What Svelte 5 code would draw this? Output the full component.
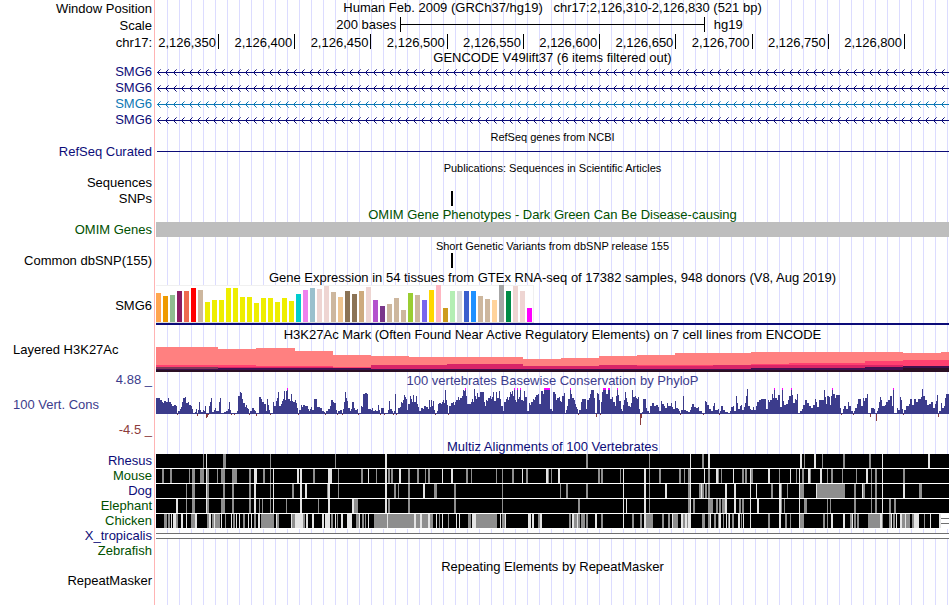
<script lang="ts">
    // drawings use three units for each pixel at the default width
    const UNITS = 2379;

    const positions = [
        "2,126,350", "2,126,400", "2,126,450", "2,126,500", "2,126,550",
        "2,126,600", "2,126,650", "2,126,700", "2,126,750", "2,126,800",
    ];

    const genes = [
        { name: "SMG6", tone: "navy" },
        { name: "SMG6", tone: "navy" },
        { name: "SMG6", tone: "blue" },
        { name: "SMG6", tone: "navy" },
    ];

    // colour:height of each tissue
    const tissues = (
        "ffa54f:29 ee9a00:26 8fbc8f:27 8b1c62:31 ee6a50:31 ff0000:34 cdb79e:32 " +
        "eeee00:20 eeee00:22 eeee00:22 eeee00:34 eeee00:34 eeee00:25 eeee00:25 " +
        "eeee00:19 eeee00:24 eeee00:24 eeee00:20 eeee00:24 eeee00:21 00cdcd:28 " +
        "ee82ee:32 9ac0cd:34 eed5d2:33 eed5d2:36 cdb79e:30 eec591:25 8b7355:31 " +
        "8b7355:28 cdaa7d:31 eed5d2:35 b452cd:22 7a378b:16 cdb79e:18 cdb79e:24 " +
        "cdb79e:12 9acd32:29 cdb79e:27 7a67ee:22 ffd700:32 ffb6c1:37 cd9b1d:14 " +
        "b4eeb4:31 d9d9d9:31 3a5fcd:31 1e90ff:31 cdb79e:26 cdb79e:23 ffd39b:22 " +
        "a6a6a6:37 008b45:31 eed5d2:36 eed5d2:31 ff00ff:14"
    ).split(" ").map((t) => {
        const [color, height] = t.split(":");
        return { color: "#" + color, height: +height };
    });

    // x:top steps, each layer filled down to the floor
    const FLOOR = 29;
    const layers = [
        { color: "#ff8080", steps: "0:4 62:6 100:5 139:8 177:12 215:13 253:14 367:16 405:15 443:13 481:12 519:10 595:9 747:10 785:9" },
        { color: "#ff4070", steps: "0:22 100:23 177:24 215:23 291:22 367:23 443:22 595:21 633:20 709:18 747:17" },
        { color: "#d82468", steps: "0:24 177:25 215:22 291:21 367:23 443:22 481:23 557:22 709:22 747:23" },
        { color: "#803858", steps: "0:24 62:26" },
        { color: "#401050", steps: "0:26 62:25 177:25 215:26 253:26 595:25 709:24 747:23" },
        { color: "#2c1024", steps: "0:27 595:27 747:25" },
    ].map(({ color, steps }) => ({
        color,
        path:
            steps
                .split(" ")
                .map((s, i) => {
                    const [x, y] = s.split(":");
                    return (i ? "H" : "M") + x + (i ? "V" : " ") + y;
                })
                .join("") + `H793V${FLOOR}H0Z`,
    }));

    // x:score, x counted from the start of the chunk
    const scores = readScores([
        [-168, "168:16 180:14 186:12 189:11 192:13 198:12 204:16 207:12 213:10 216:8 222:9 228:8 231:-1 234:3 240:5 243:7 246:12 249:16 252:16 255:17 258:11 264:12 267:9 273:8 276:5 279:1 285:2 288:5 291:-2 294:4 297:12 300:4 303:2 309:4 312:3 315:8 318:-4 321:-3 324:-1 327:8 330:12 333:16 336:2 342:4 345:6 348:3 354:3 357:12 360:16 363:1 372:2 378:3 384:5 387:12 390:4 393:-1 399:1 402:-1 408:1 411:3 414:18 420:22 423:21 426:15 429:11 435:7 438:9 441:6 444:5 447:-1 450:3 456:6 462:4 465:3 468:-2 474:1 477:17 483:15 486:12 492:10 498:3 501:15 504:9 507:4 510:-1 519:12 522:8 528:13 531:16 534:22 537:8 543:10 546:13 549:15 552:23 555:14 558:23 561:26 564:15 570:13 573:20 576:13 579:12 585:14 588:11 591:6 594:-1 597:4 603:9 606:7 609:9 615:8 621:8 624:5 627:3 630:5 633:7 636:4 642:15 651:7 660:6 666:3 672:2 675:-1 678:3 684:5 690:8 693:14 699:12 702:11 708:4 711:-1 714:3 720:4 726:-1 729:5 732:12 735:22 738:16 741:13 744:6 750:3 753:5 756:12 762:6 765:4 771:5 774:-1 783:8 786:7 789:20 795:21 801:20 804:5 810:5 813:3 819:8 825:4 828:7 834:5"],
        [642, "0:5 3:4 6:6 9:3 15:4 18:3 24:9 27:4 30:-1 33:6 42:-1 54:4 57:13 60:5 66:3 69:-1 72:3 75:20 78:-1 84:6 90:7 93:12 96:11 99:14 102:19 105:17 108:15 111:4 114:10 120:18 123:15 126:12 129:19 132:12 138:18 141:10 144:7 147:3 153:6 159:5 162:8 168:7 174:5 177:14 180:7 183:14 186:8 189:13 192:4 195:-1 201:3 204:10 207:11 213:10 216:12 219:14 222:11 225:24 228:14 231:9 234:-1 237:8 243:11 249:12 252:9 255:12 258:14 264:17 267:14 270:16 276:18 279:24 282:23 285:26 288:18 291:10 300:10 303:12 306:15 309:12 312:25 315:18 318:15 321:21 324:17 330:22 342:12 345:8 348:14 351:13 354:16 360:18 363:15 366:17 369:22 372:13 378:22 381:16 387:23 390:15 393:8 399:3 402:12 408:15 411:17 414:14 417:17 420:22 423:20 426:23 429:18 432:26 435:14 438:12 441:26 444:15 447:17 450:26 453:14 459:13 462:23 465:17 468:17 471:3 477:11 480:9 483:12 489:15 492:14 495:17 498:19 504:20 507:10 513:23 519:20 522:26 540:5 546:3 549:22 555:20 558:14 561:16 567:17 570:13 573:12 576:18 582:21 585:1 588:4 591:8 594:15 600:26 603:20 606:16 612:14 615:10 618:7 621:5 624:-1 627:4 633:12 636:15 642:15 648:5 651:14 657:16 660:20 663:24 672:16 675:1 678:-3 681:21 684:20 687:14 690:-1 693:12 696:22 699:26 708:20 714:26 720:15 726:17 729:12 735:8 738:18 741:26 744:19 747:13 753:5 756:3 759:9 762:14 765:22 768:16 771:12 774:8 780:7 783:11 786:24 789:17 795:18 798:16 801:15 804:17 807:5 810:-11"],
        [1452, "0:-11 3:-4 6:2 9:15 15:15 18:6 21:3 27:1 30:8 36:11 42:8 48:9 54:7 57:3 63:13 66:10 72:8 75:6 81:11 84:8 93:11 96:7 99:5 105:13 108:6 114:5 117:3 120:-1 123:4 129:18 132:4 138:3 144:2 150:4 153:7 156:10 162:7 168:6 174:7 177:3 186:1 189:-1 195:13 198:12 201:9 207:5 213:3 219:8 222:11 225:4 234:5 237:-1 240:3 243:8 249:4 255:2 264:1 270:3 273:7 279:8 282:3 288:18 291:11 294:5 300:8 303:9 306:4 312:7 315:11 318:18 321:25 324:8 330:5 333:4 339:7 342:4 348:8 351:12 357:14 363:15 378:5 384:14 387:12 390:14 396:20 399:16 402:26 405:16 411:14 414:19 420:7 426:26 429:13 432:9 438:10 444:14 447:18 453:26 456:19 459:11 465:15 468:14 471:20 474:1 480:3 486:5 489:9 495:14 501:11 507:8 513:6 519:9 525:15 528:12 531:7 537:14 546:14 552:24 555:17 558:10 561:18 567:17 570:9 573:18 576:26 579:20 585:16 588:19 600:6 603:-1 609:5 612:8 618:5 624:12 627:8 633:3 639:-1 642:3 645:6 651:10 654:15 663:8 669:16 672:13 675:16 681:20 684:1 690:-3 693:6 702:5 705:1 708:-7 711:3 714:6 717:12 720:17 723:14 726:8 735:9 738:12 744:14 750:18 756:8 759:26 762:1 771:6 774:4 780:17 783:14 786:5 789:-1 792:4 798:8 807:10 810:15 816:9 822:15 828:12 834:15 843:17 846:25 849:18 855:14 861:9 867:10 873:12 879:6 885:10 888:13 891:19 894:-3 897:3 903:11 906:6 912:8 915:16 918:20 927:0"],
    ]);

    function readScores(chunks: [number, string][]) {
        const points = chunks.flatMap(([start, text]) =>
            text.split(" ").map((p) => {
                const [x, score] = p.split(":").map(Number);
                return { x: x + start, score };
            }),
        );
        points.sort((a, b) => a.x - b.x);
        return points.slice(0, -1).map((p, i) => ({ ...p, width: points[i + 1].x - p.x }));
    }

    // g = gap in the alignment, w = no aligned bases; x:width, width 3 when left out
    const species = [
        {
            name: "Rhesus", tone: "navy",
            marks: readMarks([
                [-168, "g309 w318 g369:9 g510 g705 w855:6"],
                [672, "g618:6 g807"],
                [1512, "w90 g126:6 w144:6 w420:6 g432 w462:6 g486 g549:6 g627:6 w666 w804:6"],
            ]),
        },
        {
            name: "Mouse", tone: "green",
            marks: readMarks([
                [-168, "g186:6 g210:6 g267 g276:9 g300:12 w318 g321:6 g351 g363:12 g396:15 g447:6 w462:9 g489:6 g510 w519 w591:6 w600:6 g639:6 w684:12 g714 g783:6 w804 g828 w855:6 g864:6"],
                [672, "g24:6 g33:6 w57:6 g84:6 g111:6 g135 g144:6 w186 w213:6 g258:6 g273 g348 g366 g396:6 w426 g438:6 w498:6 g504 g513 w534:6 g654:6 g663:6 g720 w729 w792:6 g807 g837:6"],
                [1512, "g57:6 g72 g84:6 w90 w132 g144:6 w168:6 g174 g183 w219 g246:6 g255:6 w270 g273:6 w324:6 g357 w390 g408 w417 g426:6 w444:6 g450 w480:6 g501 g513:6 g546 g588 w618:6 g633 g645:6 w666 g729:6"],
            ]),
        },
        {
            name: "Dog", tone: "navy",
            marks: readMarks([
                [-168, "g258 g276:9 w318 g321:6 g369:6 g396:6 g447:6 w462:6 g510 w519 g576:6 w600:6 w615:6 g681:3 w684:6 g714 w855:6"],
                [672, "g42:6 g54 g84:6 w129:6 g162:9 g222:6 g366 g540 g558:6 g618:6 w729 w792:6 g807 w855:6"],
                [1512, "g84:6 w90 g117:6 w123 g126:6 g135:6 g144:6 w195:6 w222:6 w270 w288 g333:6 w357:6 g363 g381 w417 g420:12 w468 g471:84 g582:6 w606 g609:6 g633 g645:6 w666 w729:6 g777:9"],
            ]),
        },
        {
            name: "Elephant", tone: "green",
            marks: readMarks([
                [-168, "w228:6 g258 g276:9 w318 g321:6 g363:12 g396:6 g447:6 w462:6 g477 g486 g510 w519 g558 w600:6 g654 w684:6 w756:6 g762:12 w855:6 g864:6"],
                [672, "g24:6 g84:6 g222:6 g366 g594:6 w729 w738 w792:6 g807"],
                [1512, "g84:6 w90 g99:6 g144:15 g168:6 g177:6 g186:9 w195:6 w222:6 g237:6 g246:6 w270 w291:6 w357:6 g363 g372 w417 g432:9 g501 g510 g582:6 g633 g645:6 w666 g687:6 g702:6"],
            ]),
        },
        {
            name: "Chicken", tone: "green",
            marks: readMarks([
                [-168, "g192:9 g204:6 w213:3 w219:9 g228:6 w243:6 w258 g273:12 w285:6 g321:6 w327:6 g336:6 w342 g345:15 w363 g375 w393 g399:6 w408 w417 g429:6 w444 w453 g462:6 w474:6 g483:6 g489:33 w528 g531:6 w573 g576:9 w585:24 g609:6 w618:6 w636:6 w666:6 w675:15 g693:6 w705 g711 w723:6 w741:15 g768:9 w777 g786:6 g795 w804 g822:9 g831:39"],
                [672, "g0:102 w21 w102:6 g108:12 w120:6 g126:18 w144:6 g150:9 w168 g177 w186 g204 w228 w237 g264:9 w276:12 g288:63 w360 g366:9 w375 w444:9 w456:6 g474:6 w480:6 g567:6 w576:6 g582:9 w591 g594:6 g603:12 g618:6 w645:6 g663:6 w729 g756:6 g780:6 w792:6 g798:21"],
                [1512, "g6:6 g24:6 w36 g39:15 w63:6 g69:6 w75:6 g81 w84:9 g126:9 g144:6 w150 g162:6 g174 w177:6 g189 w198 g204 w207 g216:6 w234:6 g243 w249 w270 g324:6 w357:6 g375:6 g390 w417 g420:12 g489:6 g501 w513:6 w549:6 g570:6 w576 g582:6 g591:6 g624:36 w660:6 g666 g687:6 w693 g699:6 w708 w720:6 g726:9 w735 g738:12 g756:6 w762:15 g792 w810 w837:6"],
            ]),
            end: 2355,
        },
    ];

    function readMarks(chunks: [number, string][]) {
        return chunks.flatMap(([start, text]) =>
            text.split(" ").map((m) => {
                const [x, width] = m.slice(1).split(":");
                return { kind: m[0], x: +x + start, width: +(width ?? 3) };
            }),
        );
    }
</script>

<main class="browser">
    <div class="row position">
        <span class="label">Window Position</span>
        <h1>Human Feb. 2009 (GRCh37/hg19)&nbsp;&nbsp; chr17:2,126,310-2,126,830 (521 bp)</h1>
    </div>
    <div class="row position">
        <span class="label">Scale</span>
        <div class="scale">
            <span class="from">200 bases</span>
            <span class="bar"></span>
            <span class="to">hg19</span>
        </div>
    </div>
    <div class="row ruler">
        <span class="label">chr17:</span>
        <div class="ticks">
            {#each positions as position, i}
                <span class="tick" style="flex-grow: {i ? 50 : 41}">{position}</span>
            {/each}
            <span class="rest"></span>
        </div>
    </div>

    <section>
        <h2 class="tight">GENCODE V49lift37 (6 items filtered out)</h2>
        {#each genes as gene, i}
            <div class="row {gene.tone}">
                <span class="label">{gene.name}</span>
                <svg class="gene" aria-hidden="true">
                    <defs>
                        <pattern id="arrows{i}" width="8" height="16" patternUnits="userSpaceOnUse">
                            <path d="M1 8h1v1h-1zM2 7h1v1h-1zM3 6h1v1h-1zM2 9h1v1h-1zM3 10h1v1h-1z" fill="currentColor" />
                            <path d="M4 5h1v1h-1zM4 11h1v1h-1z" fill="currentColor" opacity="0.6" />
                        </pattern>
                    </defs>
                    <rect x="1" y="8" width="100%" height="1" fill="currentColor" />
                    <rect width="100%" height="16" fill="url(#arrows{i})" />
                </svg>
            </div>
        {/each}
    </section>

    <section>
        <h2 class="small">RefSeq genes from NCBI</h2>
        <div class="row navy">
            <span class="label">RefSeq Curated</span>
            <div class="line"></div>
        </div>
    </section>

    <section class="publications">
        <h2 class="small">Publications: Sequences in Scientific Articles</h2>
        <div class="row">
            <span class="label">Sequences</span>
        </div>
        <div class="row short">
            <span class="label">SNPs</span>
            <svg class="plot" viewBox="0 0 {UNITS} 15" preserveAspectRatio="none" aria-hidden="true">
                <rect x="885" width="6" height="15" />
            </svg>
        </div>
    </section>

    <section class="green">
        <h2>OMIM Gene Phenotypes - Dark Green Can Be Disease-causing</h2>
        <div class="row short">
            <span class="label">OMIM Genes</span>
            <div class="block"></div>
        </div>
    </section>

    <section>
        <h2 class="small">Short Genetic Variants from dbSNP release 155</h2>
        <div class="row">
            <span class="label">Common dbSNP(155)</span>
            <svg class="plot snp" viewBox="0 0 {UNITS} 15" preserveAspectRatio="none" aria-hidden="true">
                <rect x="885" width="6" height="15" />
            </svg>
        </div>
    </section>

    <section>
        <h2>Gene Expression in 54 tissues from GTEx RNA-seq of 17382 samples, 948 donors (V8, Aug 2019)</h2>
        <div class="row gtex">
            <span class="label">SMG6</span>
            <div class="expression">
                <div class="bars">
                    {#each tissues as tissue}
                        <span style="height: {tissue.height}px; background: {tissue.color}"></span>
                    {/each}
                </div>
            </div>
        </div>
    </section>

    <section>
        <h2 class="tall">H3K27Ac Mark (Often Found Near Active Regulatory Elements) on 7 cell lines from ENCODE</h2>
        <div class="row histone">
            <span class="label left">Layered H3K27Ac</span>
            <svg class="plot" viewBox="0 0 793 {FLOOR}" preserveAspectRatio="none" aria-hidden="true">
                {#each layers as layer}
                    <path d={layer.path} fill={layer.color} />
                {/each}
            </svg>
        </div>
    </section>

    <section class="phylop">
        <div class="axis">
            <span class="label">4.88 _</span>
            <span class="label left">100 Vert. Cons</span>
            <span class="label low">-4.5 _</span>
        </div>
        <div class="wiggle">
            <h2>100 vertebrates Basewise Conservation by PhyloP</h2>
            <svg class="plot" viewBox="0 0 {UNITS} 50" preserveAspectRatio="none" aria-hidden="true">
                {#each scores as s}
                    {#if s.score > 0}
                        <rect x={s.x} y={26 - s.score} width={s.width} height={s.score} fill="#3c3c8c" />
                        {#if s.score === 26}
                            <rect x={s.x} y="0" width={s.width} height="2" fill="#ff00ff" />
                        {/if}
                    {:else}
                        <rect x={s.x} y="26" width="3" height={-s.score} fill="#8c3c3c" />
                    {/if}
                {/each}
                <rect y="25" width={UNITS} height="1" fill="#3c3c8c" />
            </svg>
        </div>
    </section>

    <section>
        <h2 class="navy multiz">Multiz Alignments of 100 Vertebrates</h2>
        {#each species as s}
            <div class="row aligned {s.tone}">
                <span class="label">{s.name}</span>
                <svg class="plot" viewBox="0 0 {UNITS} 15" preserveAspectRatio="none" aria-hidden="true">
                    <rect width={UNITS} height="15" fill="#fff" />
                    <rect width={s.end ?? UNITS} height="14" />
                    {#each s.marks as mark}
                        <rect
                            x={mark.x}
                            width={mark.width}
                            height="14"
                            fill={mark.kind === "g" ? "#8e8e8e" : "#e4e4e4"}
                        />
                    {/each}
                    {#if s.end}
                        <path d="M{s.end} 4H{UNITS}v1H{s.end}zM{s.end} 9H{UNITS}v1H{s.end}z" fill="#707070" />
                    {/if}
                </svg>
            </div>
        {/each}
        <div class="row aligned navy">
            <span class="label">X_tropicalis</span>
            <div class="double"></div>
        </div>
        <div class="row aligned green">
            <span class="label">Zebrafish</span>
        </div>
    </section>

    <section>
        <h2 class="tight">Repeating Elements by RepeatMasker</h2>
        <div class="row">
            <span class="label">RepeatMasker</span>
        </div>
    </section>
</main>

<style>
    :global(body) {
        margin: 0;
        background: #fff;
    }

    .browser {
        box-sizing: border-box;
        min-height: 100vh;
        padding-right: 1px;
        font: 13px/16px "Liberation Sans", Arial, sans-serif;
        color: #000;
        background:
            linear-gradient(#ffb4b4, #ffb4b4) 154px 0 / 1px 100% no-repeat,
            repeating-linear-gradient(to right, transparent 0 11px, #dcdcff 11px 12px) 156px 0 / 100% 100% no-repeat;
    }

    h1,
    h2 {
        margin: 0;
        font-size: 13px;
        font-weight: normal;
        line-height: 16px;
        text-align: center;
        white-space: nowrap;
    }

    h2 {
        height: 16px;
        padding-left: 156px;
        line-height: 18px;
    }

    h2.small {
        font-size: 11px;
    }

    h2.tight {
        height: 14px;
        line-height: 16px;
    }

    h2.tall {
        height: 18px;
        line-height: 20px;
    }

    h2.multiz {
        line-height: 18px;
    }

    .row {
        display: grid;
        grid-template-columns: 156px minmax(0, 1fr);
        height: 16px;
    }

    .label {
        padding-right: 4px;
        text-align: right;
        white-space: nowrap;
    }

    .label.left {
        padding-left: 13px;
        text-align: left;
    }

    .navy {
        color: #0c0c78;
    }

    .blue {
        color: #0c78b4;
    }

    .green {
        color: #005000;
    }

    .plot {
        display: block;
        width: 100%;
        height: 100%;
        shape-rendering: crispEdges;
    }

    .position {
        height: 17px;
        line-height: 17px;
    }

    .scale {
        display: grid;
        /* the bar spans 200 of the 521 bases */
        grid-template-columns: minmax(0, 321fr) minmax(0, 400fr) minmax(0, 321fr);
        line-height: 16px;
    }

    .from {
        padding-right: 4px;
        text-align: right;
    }

    .to {
        padding-left: 9px;
    }

    .bar {
        box-sizing: border-box;
        height: 15px;
        border: solid #000;
        border-width: 0 1px;
        background: linear-gradient(#000, #000) 0 7px / 100% 1px no-repeat;
    }

    .ruler {
        line-height: 18px;
    }

    .ticks {
        display: flex;
        height: 15px;
    }

    .tick {
        flex: 50 0 0;
        box-sizing: border-box;
        border-right: 1px solid #000;
        padding-right: 2px;
        text-align: right;
        white-space: nowrap;
    }

    .rest {
        flex: 30 0 0;
    }

    .gene {
        display: block;
        width: 100%;
        height: 16px;
        shape-rendering: crispEdges;
    }

    .line {
        height: 1px;
        margin: 7px 0 0 1px;
        background: #0c0c78;
    }

    .publications h2 {
        height: 15px;
        line-height: 16px;
    }

    .snp {
        height: 15px;
    }

    .short {
        height: 15px;
        line-height: 15px;
    }

    .block {
        background: #bebebe;
    }

    .gtex {
        height: 40px;
        line-height: 42px;
    }

    .expression {
        height: 38px;
        border-bottom: 2px solid #0c0c78;
    }

    .bars {
        box-sizing: border-box;
        display: flex;
        align-items: flex-end;
        gap: 2px;
        width: 378px;
        height: 38px;
        border-bottom: 1px solid #dcdcdc;
        background: #fff;
        box-shadow: inset -1px 1px #f0f0f0;
    }

    .bars span {
        width: 5px;
    }

    .histone {
        height: 29px;
        line-height: 14px;
    }

    .phylop {
        display: grid;
        grid-template-columns: 156px minmax(0, 1fr);
        color: #3c3c8c;
    }

    .axis {
        display: flex;
        flex-direction: column;
        justify-content: space-between;
        height: 66px;
    }

    .low {
        color: #8c3c3c;
    }

    .wiggle h2 {
        padding: 0;
    }

    .wiggle .plot {
        height: 50px;
    }

    .aligned {
        height: 15px;
        line-height: 14px;
    }

    .double {
        height: 4px;
        margin-top: 4px;
        border: solid #707070;
        border-width: 1px 0;
        background: #fff;
    }
</style>
